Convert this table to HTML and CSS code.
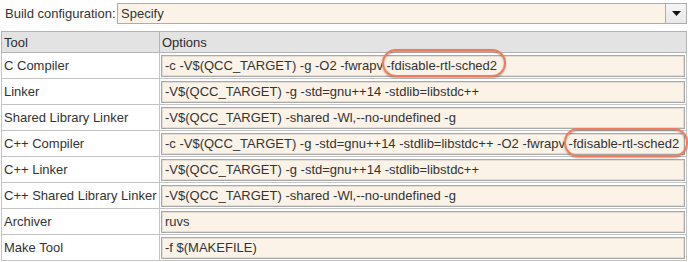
FILE: index.html
```html
<!DOCTYPE html>
<html>
<head>
<meta charset="utf-8">
<link rel="stylesheet" href="styles.css">
</head>
<body>
<div class="page">
  <div class="config">
    <span class="config-label">Build configuration:</span>
    <div class="select">
      <span class="select-value">Specify</span>
      <span class="select-btn"><svg width="9" height="5" viewBox="0 0 9 5"><path d="M0 0H9L4.5 5Z" fill="#111"/></svg></span>
    </div>
  </div>
  <table class="tools">
    <thead>
      <tr><th class="col-tool">Tool</th><th>Options</th></tr>
    </thead>
    <tbody>
      <tr><td class="tool">C Compiler</td><td class="opt"><div class="field">-c -V$(QCC_TARGET) -g -O2 -fwrapv -fdisable-rtl-sched2</div></td></tr>
      <tr><td class="tool">Linker</td><td class="opt"><div class="field">-V$(QCC_TARGET) -g -std=gnu++14 -stdlib=libstdc++</div></td></tr>
      <tr><td class="tool">Shared Library Linker</td><td class="opt"><div class="field">-V$(QCC_TARGET) -shared -Wl,--no-undefined -g</div></td></tr>
      <tr><td class="tool">C++ Compiler</td><td class="opt"><div class="field">-c -V$(QCC_TARGET) -g -std=gnu++14 -stdlib=libstdc++ -O2 -fwrapv -fdisable-rtl-sched2</div></td></tr>
      <tr><td class="tool">C++ Linker</td><td class="opt"><div class="field">-V$(QCC_TARGET) -g -std=gnu++14 -stdlib=libstdc++</div></td></tr>
      <tr><td class="tool">C++ Shared Library Linker</td><td class="opt"><div class="field">-V$(QCC_TARGET) -shared -Wl,--no-undefined -g</div></td></tr>
      <tr><td class="tool">Archiver</td><td class="opt"><div class="field">ruvs</div></td></tr>
      <tr><td class="tool">Make Tool</td><td class="opt"><div class="field">-f $(MAKEFILE)</div></td></tr>
    </tbody>
  </table>
  <div class="mark mark-1"></div>
  <div class="mark mark-2"></div>
</div>
</body>
</html>
```

FILE: styles.css
```css
html, body {
  margin: 0;
  padding: 0;
  background: #ffffff;
}
body {
  font-family: "Liberation Sans", Arial, sans-serif;
  font-size: 13px;
  color: #333333;
}
.page {
  position: relative;
  width: 688px;
  height: 262px;
  overflow: hidden;
}
.config {
  display: flex;
  align-items: center;
  padding: 3px 1px 0 5px;
  height: 21px;
}
.config-label {
  width: 112px;
  flex: none;
}
.select {
  flex: 1;
  display: flex;
  height: 21px;
  box-sizing: border-box;
  border: 1px solid #adadad;
  background: #fcf3e8;
}
.select-value {
  flex: 1;
  padding-left: 3px;
  line-height: 19px;
}
.select-btn {
  width: 20px;
  border-left: 1px solid #adadad;
  background: linear-gradient(#f6f6f6, #e8e8e8);
  display: flex;
  align-items: center;
  justify-content: center;
}
.tools {
  margin: 7px 0 0 1px;
  width: 686px;
  border-collapse: collapse;
  border: 1px solid #aaaaaa;
}
.tools th {
  background: #e3e3e3;
  font-weight: normal;
  text-align: left;
  height: 20px;
  padding: 0 2px;
  border: 1px solid #b4b4b4;
  color: #2b2b2b;
}
.tools th.col-tool {
  width: 153px;
}
.tools td {
  height: 26px;
  border: 1px solid #c4c4c4;
  padding: 0;
  box-sizing: border-box;
}
.tools td.tool {
  padding: 0 2px;
  white-space: nowrap;
}
.tools td.opt {
  padding: 1px;
}
.field {
  height: 22px;
  box-sizing: border-box;
  border: 1px solid #a9a9a9;
  box-shadow: inset 0 0 0 1px #e4ddd4;
  background: #fcf3e8;
  padding-left: 3px;
  line-height: 20px;
  white-space: nowrap;
  overflow: hidden;
}
.mark {
  position: absolute;
  box-sizing: border-box;
  border: 2.5px solid #ef7c5a;
  border-radius: 14px;
  box-shadow: 0 1px 2px rgba(0, 0, 0, 0.35), inset 0 1px 2px rgba(0, 0, 0, 0.35);
}
.mark-1 {
  left: 382px;
  top: 49px;
  width: 124px;
  height: 28px;
}
.mark-2 {
  left: 564px;
  top: 128px;
  width: 124px;
  height: 29px;
}
```
